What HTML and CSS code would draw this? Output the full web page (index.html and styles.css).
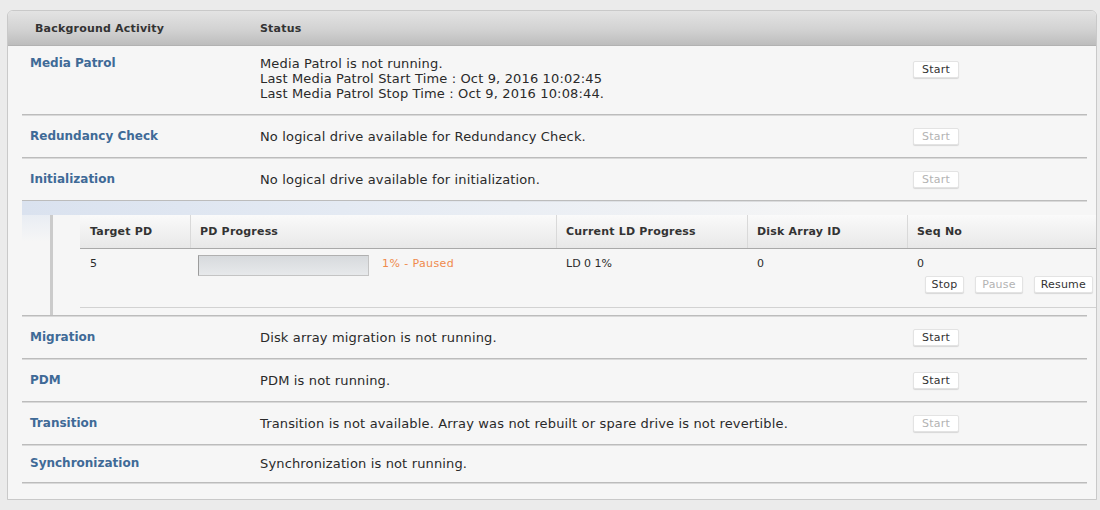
FILE: index.html
```html
<!DOCTYPE html>
<html>
<head>
<meta charset="utf-8">
<link rel="stylesheet" href="styles.css">
</head>
<body>
<div class="panel">
  <div class="head">
    <div class="h-act">Background Activity</div>
    <div class="h-status">Status</div>
  </div>
  <div class="body">
    <div class="row row-top">
      <div class="label">Media Patrol</div>
      <div class="status">Media Patrol is not running.<br>Last Media Patrol Start Time : Oct 9, 2016 10:02:45<br>Last Media Patrol Stop Time : Oct 9, 2016 10:08:44.</div>
      <div class="act"><button class="btn btn-start">Start</button></div>
    </div>
    <div class="row">
      <div class="label">Redundancy Check</div>
      <div class="status">No logical drive available for Redundancy Check.</div>
      <div class="act"><button class="btn btn-start" disabled>Start</button></div>
    </div>
    <div class="row">
      <div class="label">Initialization</div>
      <div class="status">No logical drive available for initialization.</div>
      <div class="act"><button class="btn btn-start" disabled>Start</button></div>
    </div>
    <div class="sub">
      <div class="sub-band"></div>
      <div class="sub-wrap">
        <div class="sub-table">
          <div class="sub-head">
            <div class="c c1">Target PD</div>
            <div class="c c2">PD Progress</div>
            <div class="c c3">Current LD Progress</div>
            <div class="c c4">Disk Array ID</div>
            <div class="c c5">Seq No</div>
          </div>
          <div class="sub-row">
            <div class="c c1">5</div>
            <div class="c c2 prog-cell"><div class="bar"></div><span class="paused">1% - Paused</span></div>
            <div class="c c3">LD 0 1%</div>
            <div class="c c4">0</div>
            <div class="c c5">
              <div>0</div>
              <div class="btns">
                <button class="btn">Stop</button>
                <button class="btn" disabled>Pause</button>
                <button class="btn">Resume</button>
              </div>
            </div>
          </div>
        </div>
      </div>
    </div>
    <div class="row">
      <div class="label">Migration</div>
      <div class="status">Disk array migration is not running.</div>
      <div class="act"><button class="btn btn-start">Start</button></div>
    </div>
    <div class="row">
      <div class="label">PDM</div>
      <div class="status">PDM is not running.</div>
      <div class="act"><button class="btn btn-start">Start</button></div>
    </div>
    <div class="row">
      <div class="label">Transition</div>
      <div class="status">Transition is not available. Array was not rebuilt or spare drive is not revertible.</div>
      <div class="act"><button class="btn btn-start" disabled>Start</button></div>
    </div>
    <div class="row row-short">
      <div class="label">Synchronization</div>
      <div class="status">Synchronization is not running.</div>
      <div class="act"></div>
    </div>
  </div>
</div>
</body>
</html>
```
FILE: styles.css
```css
html, body {
  margin: 0;
  padding: 0;
  background: #ebebeb;
  font-family: "DejaVu Sans", "Liberation Sans", sans-serif;
  font-size: 11px;
  color: #2b2b2b;
}
body {
  padding: 10px 0 0 7px;
}
.panel {
  width: 1088px;
  height: 488px;
  border: 1px solid #c9c9c9;
  border-radius: 6px 6px 0 0;
  background: #f6f6f6;
  box-shadow: 0 1px 0 #d6d6d6;
  overflow: hidden;
}
.head {
  height: 34px;
  display: flex;
  align-items: center;
  background: linear-gradient(#e3e3e3, #d2d2d2 55%, #bdbdbd);
  border-bottom: 1px solid #b2b2b2;
  font-weight: bold;
  letter-spacing: 0.2px;
  color: #333;
}
.h-act {
  width: 225px;
  padding-left: 27px;
}
.body {
  padding: 0 9px 0 14px;
}
.row {
  display: grid;
  grid-template-columns: 238px 653px 1fr;
  align-items: center;
  padding: 13px 0 12px;
  line-height: 15px;
  border-bottom: 1px solid #bcbcbc;
  box-shadow: 0 1px 0 #d9d9d9;
}
.row-top {
  align-items: start;
  padding: 10px 0 13px;
}
.row-top .act {
  padding-top: 5px;
}
.row-short {
  padding: 11px 0 11px;
}
.label {
  padding-left: 8px;
  font-size: 12px;
  font-weight: bold;
  color: #3f6a97;
}
.status {
  font-size: 13px;
  letter-spacing: 0.15px;
  color: #2a2a2a;
}
.btn {
  font-family: "DejaVu Sans", "Liberation Sans", sans-serif;
  font-size: 11px;
  letter-spacing: 0.2px;
  height: 17px;
  line-height: 15px;
  padding: 0 6px;
  background: #fff;
  color: #333;
  border: 1px solid #e3e3e3;
  border-radius: 2px;
  box-shadow: 0 1px 1px rgba(0, 0, 0, 0.13);
  display: block;
}
.btn:disabled {
  color: #b3b3b3;
}
.btn-start {
  min-width: 46px;
}
.sub {
  border-bottom: 1px solid #bcbcbc;
  box-shadow: 0 1px 0 #d9d9d9;
  background: linear-gradient(#e2e8f2, rgba(246, 246, 246, 0) 40px) no-repeat;
  background-size: 28px 100%;
}
.sub-band {
  height: 14px;
  background: linear-gradient(to right, #dae2ef, #e4eaf3 30%, rgba(246, 246, 246, 0) 78%);
}
.sub-wrap {
  margin-left: 28px;
  border-left: 3px solid #cbcbcb;
  padding-left: 27px;
  height: 100px;
}
.sub-table {
  margin-right: -9px;
  border-bottom: 1px solid #d2d2d2;
}
.sub-head, .sub-row {
  display: grid;
  grid-template-columns: 110px 366px 191px 160px 1fr;
}
.sub-head {
  height: 33px;
  align-items: center;
  background: linear-gradient(#fafafa, #e8e8e8);
  border-bottom: 1px solid #a9a9a9;
  font-weight: bold;
  letter-spacing: 0.2px;
  color: #333;
}
.sub-head .c {
  height: 33px;
  line-height: 33px;
  padding-left: 10px;
}
.sub-head .c + .c {
  border-left: 1px solid #d9d9d9;
  padding-left: 9px;
}
.sub-row {
  height: 51px;
  padding-top: 7px;
  line-height: 15px;
}
.sub-row .c {
  padding-left: 10px;
}
.prog-cell {
  display: flex;
  align-items: flex-start;
  gap: 13px;
  padding-left: 8px !important;
}
.bar {
  width: 169px;
  height: 19px;
  margin-top: -1px;
  border: 1px solid #c4c4c4;
  border-left-color: #9c9c9c;
  border-top-color: #b0b0b0;
  background: linear-gradient(#d7dadd, #e7e9eb);
}
.paused {
  color: #ef8a4c;
  letter-spacing: 0.4px;
}
.btns {
  display: flex;
  justify-content: flex-end;
  gap: 11px;
  margin-top: 5px;
  padding-right: 3px;
}
```
